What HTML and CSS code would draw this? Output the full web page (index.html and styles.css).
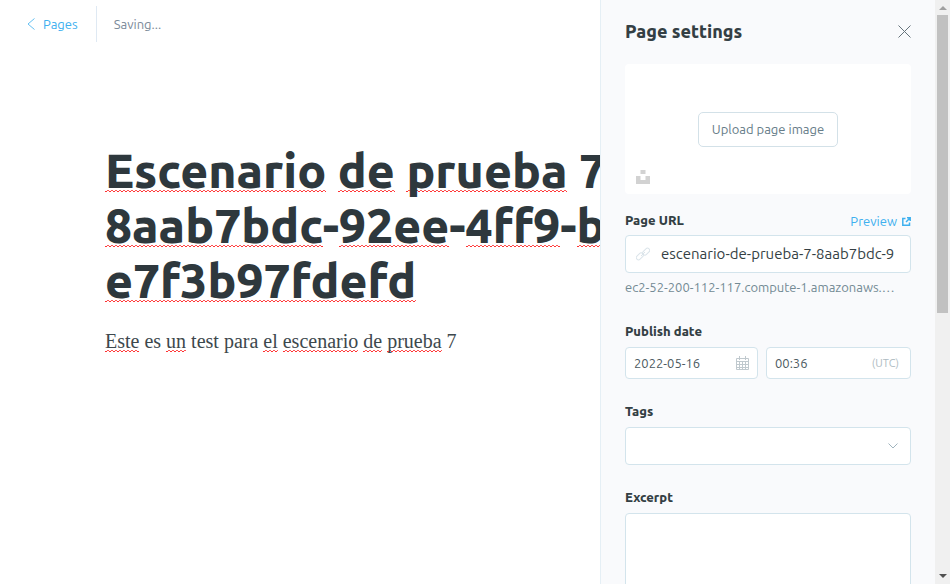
FILE: index.html
```html
<!DOCTYPE html>
<html lang="es">
<head>
<meta charset="utf-8">
<title>Page settings</title>
<link rel="stylesheet" href="styles.css">
</head>
<body>
<div class="app">
  <main class="editor">
    <header class="topbar">
      <a class="back" href="#pages">
        <svg width="8" height="12" viewBox="0 0 8 12" fill="none" stroke="currentColor" stroke-width=".8"><path d="M7.500.5 1 6l6.500 5.500"/></svg>
        <span>Pages</span>
      </a>
      <span class="status">Saving...</span>
    </header>
    <article class="post">
      <h1 class="post-title"><span class="miss">Escenario</span> <span class="miss">de</span> <span class="miss">prueba</span> 7<br><span class="miss">8aab7bdc</span>-<span class="miss">92ee</span>-<span class="miss">4ff9</span>-<span class="miss">b</span><br><span class="miss">e7f3b97fdefd</span></h1>
      <p class="post-body"><span class="miss">Este</span> es <span class="miss">un</span> test para <span class="miss">el</span> <span class="miss">escenario</span> <span class="miss">de</span> <span class="miss">prueba</span> 7</p>
    </article>
  </main>

  <aside class="settings">
    <div class="panel">
      <header class="panel-head">
        <h2>Page settings</h2>
        <button class="close" type="button" aria-label="Close">
          <svg width="13" height="13" viewBox="0 0 13 13" fill="none" stroke="currentColor"><path d="M.5.5l12 12M12.500.5l-12 12"/></svg>
        </button>
      </header>

      <div class="uploader">
        <button class="upload" type="button">Upload page image</button>
        <button class="unsplash" type="button" aria-label="Unsplash">
          <svg width="14" height="14" viewBox="0 0 14 14" fill="currentColor"><path d="M4.500 0h5v4h-5zM0 6h4.500v4h5V6H14v8H0z"/></svg>
        </button>
      </div>

      <div class="field">
        <div class="label-row">
          <label for="url">Page URL</label>
          <a class="preview" href="#preview">Preview
            <svg width="9" height="9" viewBox="0 0 9 9" fill="none" stroke="currentColor" stroke-width="1.500"><path d="M3.500 1.500H.8v6.700h6.700V5.500M5 .8h3.200V4M8 1 4 5"/></svg>
          </a>
        </div>
        <div class="box">
          <svg class="link-icon" width="14" height="14" viewBox="0 0 14 14" fill="none" stroke="currentColor"><rect x="-.2" y="7.200" width="8" height="4.400" rx="2.200" transform="rotate(-45 3.800 9.400)"/><rect x="6.200" y="2.400" width="8" height="4.400" rx="2.200" transform="rotate(-45 10.200 4.600)"/><path d="m5 9 4-4"/></svg>
          <input id="url" class="url" type="text" value="escenario-de-prueba-7-8aab7bdc-92ee">
        </div>
        <p class="hint">ec2-52-200-112-117.compute-1.amazonaws.…</p>
      </div>

      <div class="field">
        <label for="date">Publish date</label>
        <div class="date-row">
          <div class="box small date">
            <input id="date" type="text" value="2022-05-16">
            <svg width="13" height="14" viewBox="0 0 13 14" fill="none" stroke="currentColor"><path d="M.5 2.500h12v11H.5zM.5 5.500h12M3.500 5.500v8M6.500 5.500v8M9.500 5.500v8M.5 8.500h12M.5 11.500h12M3.500 0v4M9.500 0v4"/></svg>
          </div>
          <div class="box small time">
            <input type="text" aria-label="Publish time" value="00:36">
            <span class="zone">(UTC)</span>
          </div>
        </div>
      </div>

      <div class="field">
        <label for="tags">Tags</label>
        <div class="box">
          <input id="tags" type="text">
          <svg class="chevron" width="10" height="6" viewBox="0 0 10 6" fill="none" stroke="currentColor"><path d="M.5.5 5 5 9.500.5"/></svg>
        </div>
      </div>

      <div class="field">
        <label for="excerpt">Excerpt</label>
        <textarea id="excerpt"></textarea>
      </div>
    </div>
    <div class="scroll" aria-hidden="true">
      <span class="arrow up"></span>
      <span class="thumb"></span>
      <span class="arrow down"></span>
    </div>
  </aside>
</div>
</body>
</html>
```
FILE: styles.css
```css
* { box-sizing: border-box; }
body {
  margin: 0;
  background: #fff;
  color: #343f44;
  font: 13px/20px Ubuntu, "Noto Sans", sans-serif;
  overflow: hidden;
}
button, input, textarea { font: inherit; color: inherit; }
h1, h2, p { margin: 0; }
a { color: #3eb0ef; text-decoration: none; }
svg { display: block; flex: none; }

.app { display: flex; height: 100vh; }

.editor { flex: 1; min-width: 0; overflow: hidden; }
.topbar { display: flex; align-items: center; padding: 6px 27px; }
.back {
  display: flex;
  align-items: center;
  gap: 8px;
  height: 36px;
  padding-right: 18px;
  border-right: 1px solid #dfe9f3;
}
.status { padding-left: 17px; color: #7c8b9a; }

.post { padding: 95px 0 0 105px; white-space: nowrap; }
.post-title { color: #2e383d; font-size: 48px; line-height: 55px; font-weight: 800; }
.post-body {
  margin-top: 17px;
  color: #3d484d;
  font: 20px/32px "Liberation Serif", serif;
}
.miss {
  background:
    repeating-linear-gradient(90deg, #f33 0 2px, transparent 2px 4px) 0 100% / 100% 1px no-repeat,
    repeating-linear-gradient(90deg, transparent 0 2px, #f55 2px 4px) 0 calc(100% - 1px) / 100% 1px no-repeat;
}
.post-title .miss {
  background-position: 0 calc(100% - 5px), 0 calc(100% - 6px);
}

.settings {
  display: flex;
  flex: 0 0 350px;
  overflow: hidden;
  background: #f9fafc;
  border-left: 1px solid #e5eff5;
}
.panel { flex: 1; min-width: 0; padding: 19px 24px 0; }
.panel-head { display: flex; justify-content: space-between; align-items: center; }
.panel-head h2 { font-size: 18px; line-height: 24px; font-weight: 800; }
.close { padding: 0; border: 0; background: none; color: #65737b; }

.uploader {
  position: relative;
  display: flex;
  align-items: center;
  justify-content: center;
  height: 130px;
  margin: 21px 0 16px;
  border-radius: 4px;
  background: #fff;
}
.upload {
  height: 35px;
  padding: 0 13px;
  border: 1px solid #d3e1e8;
  border-radius: 5px;
  background: #fff;
  color: #667c88;
}
.unsplash {
  position: absolute;
  left: 11px;
  bottom: 10px;
  padding: 0;
  border: 0;
  background: none;
  color: #d2d2d2;
}

.field { margin-bottom: 22px; }
.field label { display: block; margin-bottom: 6px; font-weight: 800; }
.label-row { display: flex; justify-content: space-between; height: 25px; }
.preview { display: flex; align-items: center; gap: 5px; height: 22px; }
.box {
  display: flex;
  align-items: center;
  height: 38px;
  padding: 0 12px;
  border: 1px solid #d3e4ec;
  border-radius: 4px;
  background: #fff;
}
.box input {
  flex: 1;
  width: 100%;
  min-width: 0;
  padding: 0;
  border: 0;
  outline: 0;
  background: none;
}
.box .url { margin: 0 4px 0 11px; font-size: 15px; }
.box .link-icon { margin-left: -2px; color: #dbe4ea; }
.hint { margin: 4px 0 24px; color: #738a94; white-space: nowrap; overflow: hidden; }
.date-row { display: flex; gap: 8px; }
.box.small { height: 32px; padding: 0 8px; color: #4c5a61; }
.date { flex: 0 0 133px; }
.date svg { color: #c0c9ce; }
.time { flex: 1; min-width: 0; }
.zone { padding-right: 3px; color: #aebbc2; font-size: 11px; }
.chevron { color: #a0b4be; }
textarea {
  display: block;
  width: 100%;
  height: 108px;
  border: 1px solid #d3e4ec;
  border-radius: 4px;
  background: #fff;
  resize: none;
}

.scroll {
  display: flex;
  flex-direction: column;
  align-items: center;
  flex: 0 0 15px;
  background: #f0f0f0;
}
.arrow { border: 4px solid transparent; }
.up { margin: 2px 0 5px; border-bottom-color: #a0a0a0; }
.thumb { width: 11px; height: 51%; background: #c1c1c1; }
.down { margin: auto 0 2px; border-top-color: #505050; }
```
